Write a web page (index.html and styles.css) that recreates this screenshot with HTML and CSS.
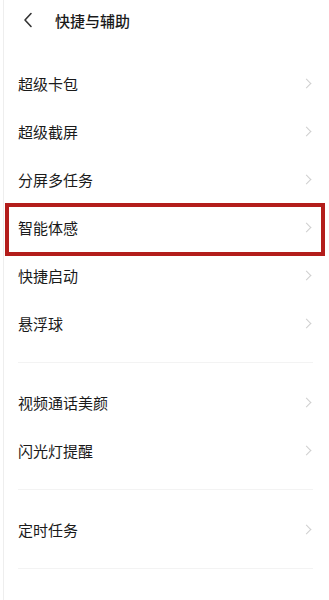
FILE: index.html
```html
<!DOCTYPE html>
<html lang="zh-CN">
<head>
    <meta charset="UTF-8">
    <meta name="viewport" content="width=device-width, initial-scale=1.0">
    <title>快捷与辅助</title>
    <link rel="stylesheet" href="styles.css">
</head>
<body>
    <div class="page">
        <div class="header">
            <svg class="back-icon" width="10" height="16" viewBox="0 0 10 16">
                <path d="M8 1.5 L2 8 L8 14.5" fill="none" stroke="#333" stroke-width="1.6" stroke-linecap="round" stroke-linejoin="round"/>
            </svg>
            <span class="header-title">快捷与辅助</span>
        </div>

        <div class="group">
            <div class="row"><span>超级卡包</span><span class="chevron"></span></div>
            <div class="row"><span>超级截屏</span><span class="chevron"></span></div>
            <div class="row"><span>分屏多任务</span><span class="chevron"></span></div>
            <div class="row highlighted"><span>智能体感</span><span class="chevron"></span><div class="mark-box"></div></div>
            <div class="row"><span>快捷启动</span><span class="chevron"></span></div>
            <div class="row"><span>悬浮球</span><span class="chevron"></span></div>
        </div>

        <div class="divider"></div>

        <div class="group">
            <div class="row"><span>视频通话美颜</span><span class="chevron"></span></div>
            <div class="row"><span>闪光灯提醒</span><span class="chevron"></span></div>
        </div>

        <div class="divider"></div>

        <div class="group">
            <div class="row"><span>定时任务</span><span class="chevron"></span></div>
        </div>

        <div class="divider"></div>

        <div class="group">
            <div class="row"><span>校准设置</span><span class="chevron"></span></div>
        </div>
    </div>
</body>
</html>
```

FILE: styles.css
```css
body {
    margin: 0;
    padding: 0;
    background-color: #ffffff;
    font-family: "Noto Sans CJK SC", "Noto Sans", sans-serif;
    color: #1a1a1a;
    overflow: hidden;
}

.page {
    border-left: 1px solid #eeeeee;
    margin-left: 3px;
    min-height: 100vh;
}

.header {
    display: flex;
    align-items: center;
    height: 40px;
    padding-left: 19px;
    margin-bottom: 19px;
}

.back-icon {
    margin-right: 22px;
}

.header-title {
    font-size: 15px;
    font-weight: 500;
    color: #1a1a1a;
}

.row {
    position: relative;
    display: flex;
    align-items: center;
    justify-content: space-between;
    height: 48px;
    padding: 0 17px 0 14px;
    font-size: 15px;
}

.chevron {
    width: 6px;
    height: 6px;
    border-top: 1.3px solid #cfcfcf;
    border-right: 1.3px solid #cfcfcf;
    transform: rotate(45deg);
    margin-right: 2px;
}

.mark-box {
    position: absolute;
    top: 0;
    left: 1px;
    right: 4px;
    height: 45px;
    border: 4px solid #b31d1b;
}

.divider {
    height: 31px;
    display: flex;
    align-items: center;
    padding: 0 16px 0 14px;
}

.divider::after {
    content: "";
    flex: 1;
    height: 1px;
    background-color: #f3f3f3;
}
```
